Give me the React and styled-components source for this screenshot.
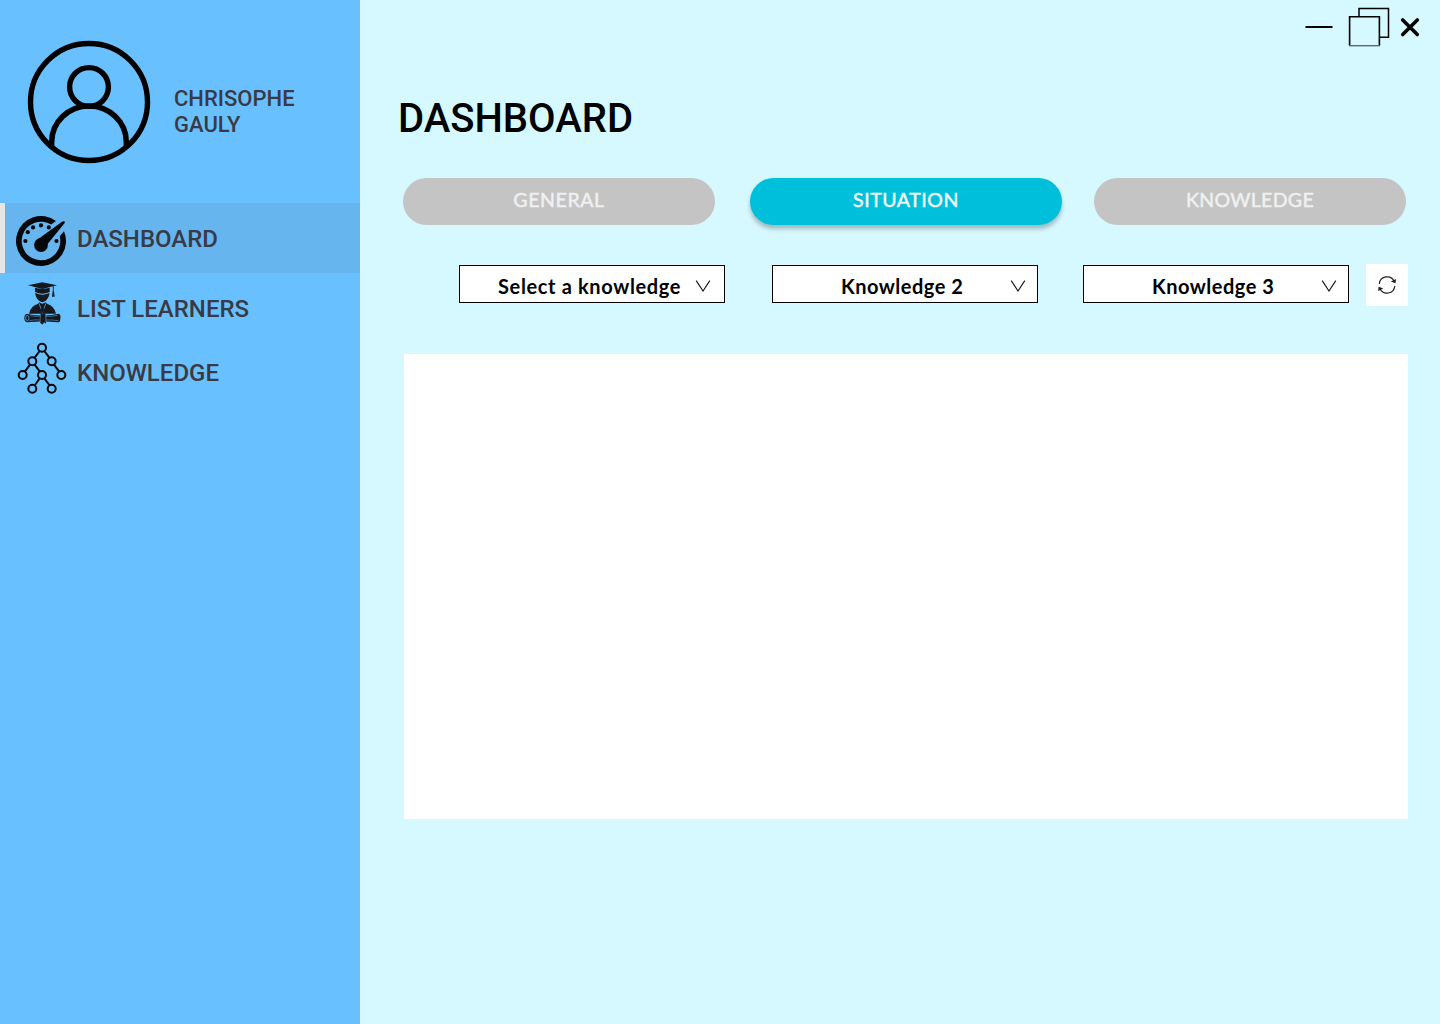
import React from "react";
import styled, { createGlobalStyle } from "styled-components";

const GlobalStyle = createGlobalStyle`
  *, *::before { box-sizing: border-box; }
  body { margin: 0; }
  button { margin: 0; padding: 0; border: 0; background: none; color: inherit; }
  svg { display: block; flex: none; overflow: visible; }
`;

const Page = styled.div`
  display: flex;
  width: 1440px;
  height: 1024px;
  background: #d6f9ff;
  font-family: Roboto, "Liberation Sans", sans-serif;
`;

const Sidebar = styled.aside`
  width: 360px;
  flex: none;
  background: #69c0ff;
  color: #393a45;
`;

const Profile = styled.div`
  display: flex;
  gap: 24px;
  height: 203px;
  padding: 41px 0 0 28px;
`;

const UserName = styled.div`
  width: 130px;
  padding-top: 45px;
  font-size: 22px;
  font-weight: 500;
  line-height: 26px;
`;

const NavItem = styled.a`
  display: flex;
  align-items: center;
  height: ${(p) => p.$height}px;
  background: ${(p) => (p.$active ? "#66b5ef" : "transparent")};
  box-shadow: ${(p) => (p.$active ? "inset 5px 0 #e6e6e6" : "none")};
  font-size: 24px;
  font-weight: 500;
  line-height: 28px;
`;

const NavIcon = styled.span`
  width: 77px;
  height: ${(p) => p.$height}px;
  flex: none;
`;

const NavLabel = styled.span`
  padding-top: 2px;
`;

const Main = styled.main`
  display: flex;
  flex-direction: column;
  flex: 1;
  padding-right: 32px;
  padding-left: 43px;
`;

const WindowBar = styled.div`
  display: flex;
  justify-content: flex-end;
  height: 60px;
  margin-right: -32px;
`;

const Title = styled.h1`
  margin: 35px 0 0 -5px;
  color: #000;
  font-size: 40px;
  font-weight: 500;
  line-height: 47px;
`;

const Tabs = styled.div`
  display: flex;
  margin-top: 36px;
`;

const Tab = styled.button`
  width: 312px;
  height: 47px;
  margin-right: ${(p) => p.$gap}px;
  padding-bottom: 4px;
  border-radius: 24px;
  background: ${(p) => (p.$active ? "#00bfdb" : "#c4c4c4")};
  box-shadow: ${(p) => (p.$active ? "0 4px 4px rgba(0, 0, 0, 0.25)" : "none")};
  color: ${(p) => (p.$active ? "#f0fbfd" : "#f0f0f0")};
  font-family: Lato, sans-serif;
  font-size: 19.5px;
  font-weight: 400;
  letter-spacing: ${(p) => p.$spacing}px;
  -webkit-text-stroke: 0.5px currentColor;
`;

const Filters = styled.div`
  display: flex;
  height: 42px;
  margin: 39px 0 0 56px;
`;

const Select = styled.button`
  display: grid;
  grid-template-columns: 1fr 16px;
  align-items: center;
  width: 266px;
  height: 38px;
  margin: 1px ${(p) => p.$gap}px 0 0;
  padding: 3px ${(p) => p.$inset}px 0 ${(p) => p.$start}px;
  border: 1px solid #000;
  background: #fff;
  color: #000;
  font-family: Lato, sans-serif;
  font-size: 20px;
  font-weight: 700;
  letter-spacing: ${(p) => p.$spacing}px;
  text-align: left;
  white-space: nowrap;
`;

const Refresh = styled.button`
  width: 42px;
  height: 42px;
  background: #fff;
`;

const Panel = styled.section`
  width: 1004px;
  height: 465px;
  margin: 48px 0 0 1px;
  background: #fff;
`;

const AvatarIcon = () => (
  <svg width="122" height="122" viewBox="0 0 122 122" fill="none" stroke="#000" strokeWidth="5.4">
    <circle cx="61" cy="61" r="58.5" />
    <circle cx="61" cy="46" r="19.4" />
    <path d="M24.4 107V101A36.6 36 0 0 1 97.6 101V107" transform="translate(-1.22 0) scale(1.02 1)" />
  </svg>
);

const GaugeIcon = () => (
  <svg width="77" height="70" viewBox="0 0 77 70" fill="#050708">
    <path d="M56 18A25 25 0 1 0 64 28.2L59.7 33.2A19.3 19.3 0 1 1 51.2 21.6Z" />
    <path d="M37.6 36.6L62.4 18.6Q66 17.4 64.3 20.6L46 43Z" />
    <circle cx="41" cy="42" r="6.9" />
    <circle cx="25.4" cy="38" r="2.1" />
    <circle cx="27.8" cy="29.2" r="2.1" />
    <circle cx="33" cy="24.4" r="2.1" />
    <circle cx="41" cy="22.4" r="2.1" />
    <circle cx="48.8" cy="24.4" r="2.1" />
    <circle cx="56.5" cy="38" r="2.1" />
  </svg>
);

const GraduateIcon = () => (
  <svg width="77" height="70" viewBox="-30 -9 231 210" fill="#15191d">
    <path d="M54 28L97 19L141 28L97 39Z" />
    <path d="M75 35Q97 41 119 35V48Q97 58 75 48Z" />
    <path d="M76 51Q97 61 118 51V55Q117 65 109 73Q97 84 85 73Q77 65 76 55Z" />
    <path d="M130 29V47" fill="none" stroke="#15191d" strokeWidth="2.5" />
    <path d="M128 46H132L134 62H126Z" />
    <path d="M88 79L97 84L107 79L111 83Q133 89 138 113H57Q62 89 84 83Z" />
    <path d="M87 82L97 109L108 82" fill="none" stroke="#69c0ff" strokeWidth="2" />
    <path d="M93 83H101L99 89L102 103L97 110L92 103L95 89Z" />
    <path d="M50 113Q73 119 97 118Q122 119 146 113Q154 117 151 128Q151 139 144 139Q98 134 53 139Q43 139 43 126Q43 115 50 113Z" />
    <path d="M60 119Q76 122 88 121M108 121Q125 122 143 118M58 134Q75 130 88 132M108 132Q125 131 145 134" fill="none" stroke="#69c0ff" strokeWidth="1.4" />
    <ellipse cx="52" cy="126" rx="5" ry="8" fill="none" stroke="#69c0ff" strokeWidth="2" />
    <path d="M91 113H107L108 143L102 139L98 146L91 141Z" />
    <path d="M91 115L90 138M107 115L108 138" fill="none" stroke="#69c0ff" strokeWidth="1.5" />
  </svg>
);

const TreeIcon = () => (
  <svg width="77" height="60" viewBox="-30 21 231 180" fill="none" stroke="#02080c" strokeWidth="6">
    <path d="M89 45L74 65M103 45L118 65M60 86L45 106M74 86L89 106M132 86L147 106M89 127L75 147M103 127L118 147" />
    <circle cx="96" cy="35" r="12" />
    <circle cx="67" cy="76" r="12" />
    <circle cx="125" cy="76" r="12" />
    <circle cx="38" cy="117" r="12" />
    <circle cx="96" cy="117" r="12" />
    <circle cx="154" cy="117" r="12" />
    <circle cx="67" cy="158" r="12" />
    <circle cx="125" cy="158" r="12" />
  </svg>
);

const WindowIcons = () => (
  <svg width="150" height="60" viewBox="0 0 150 60" fill="none" stroke="#000">
    <path d="M15.5 27H42.5" strokeWidth="2" />
    <path d="M69 16V8.5H98.5V37.3H90" strokeWidth="1.5" />
    <path d="M59.6 45.5V16.7H89.4V45.5" strokeWidth="1.6" />
    <path d="M59 45.7H90" stroke="#526166" strokeWidth="1.3" />
    <path d="M112.7 20L127.3 34.5M127.3 20L112.7 34.5" strokeWidth="3.6" strokeLinecap="round" />
  </svg>
);

const Chevron = () => (
  <svg width="16" height="14" viewBox="0 0 16 14" fill="none" stroke="#111" strokeWidth="1.1">
    <path d="M1.2 1.6L8 12L14.8 1.6" />
  </svg>
);

const RefreshIcon = () => (
  <svg width="42" height="42" viewBox="0 0 42 42" fill="none" stroke="#222" strokeWidth="1.2">
    <path d="M13.3 20A7.8 7.8 0 0 1 28.3 17.7M28.8 22A7.8 7.8 0 0 1 14 24.7" />
    <path d="M26.2 17.5L29 18.5L29.4 16ZM15.9 24.6L13.1 23.6L12.8 26.1Z" fill="#222" strokeWidth="1.1" />
  </svg>
);

const NAV = [
  { label: "DASHBOARD", Icon: GaugeIcon, height: 70, active: true },
  { label: "LIST LEARNERS", Icon: GraduateIcon, height: 70 },
  { label: "KNOWLEDGE", Icon: TreeIcon, height: 58 },
];

const TABS = [
  { label: "GENERAL", gap: 35, spacing: 0.6 },
  { label: "SITUATION", gap: 32, spacing: 0.55, active: true },
  { label: "KNOWLEDGE", gap: 0, spacing: 0.35 },
];

const SELECTS = [
  { label: "Select a knowledge", start: 38, inset: 13, gap: 47, spacing: 0.64 },
  { label: "Knowledge 2", start: 68, inset: 11, gap: 45, spacing: 0.5 },
  { label: "Knowledge 3", start: 68, inset: 11, gap: 17, spacing: 0.5 },
];

export default function App() {
  return (
    <Page>
      <GlobalStyle />
      <Sidebar>
        <Profile>
          <AvatarIcon />
          <UserName>CHRISOPHE GAULY</UserName>
        </Profile>
        <nav>
          {NAV.map(({ label, Icon, height, active }) => (
            <NavItem key={label} $height={height} $active={active}>
              <NavIcon $height={height}><Icon /></NavIcon>
              <NavLabel>{label}</NavLabel>
            </NavItem>
          ))}
        </nav>
      </Sidebar>
      <Main>
        <WindowBar><WindowIcons /></WindowBar>
        <Title>DASHBOARD</Title>
        <Tabs>
          {TABS.map((t) => (
            <Tab key={t.label} $gap={t.gap} $spacing={t.spacing} $active={t.active}>{t.label}</Tab>
          ))}
        </Tabs>
        <Filters>
          {SELECTS.map((s) => (
            <Select key={s.label} $start={s.start} $inset={s.inset} $gap={s.gap} $spacing={s.spacing}>
              <span>{s.label}</span>
              <Chevron />
            </Select>
          ))}
          <Refresh aria-label="Refresh"><RefreshIcon /></Refresh>
        </Filters>
        <Panel />
      </Main>
    </Page>
  );
}
